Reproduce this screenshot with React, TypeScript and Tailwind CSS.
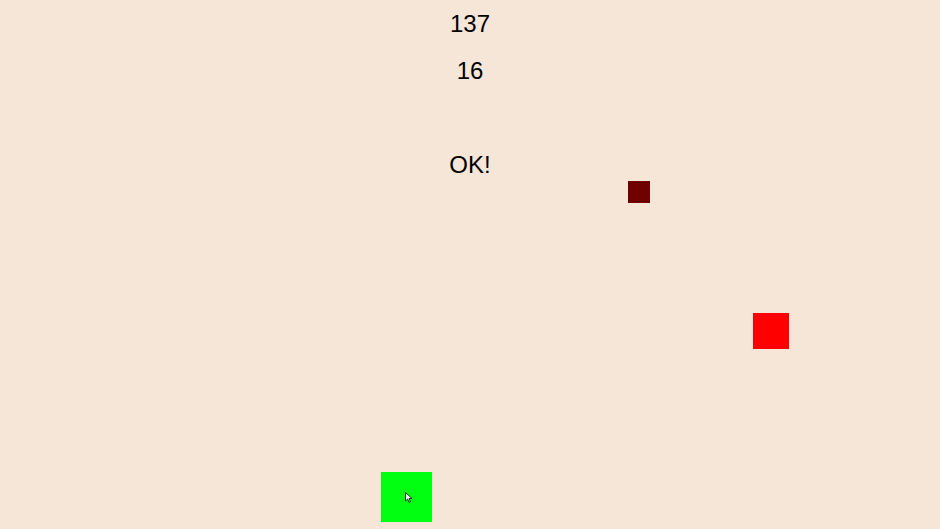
export default function App() {
  return (
    <div className="relative w-[940px] h-[529px] overflow-hidden bg-[#f5e6d8] text-black font-['Liberation_Sans',Arial,sans-serif]">
      <div className="flex flex-col items-center text-[24px] leading-[47px]">
        <div>137</div>
        <div>16</div>
        <div>&nbsp;</div>
        <div>OK!</div>
      </div>

      {/* squares on the canvas */}
      <div className="absolute left-[628px] top-[181px] w-[22px] h-[22px] bg-[#700000]" />
      <div className="absolute left-[753px] top-[313px] w-[36px] h-[36px] bg-[#ff0000]" />
      <div className="absolute left-[381px] top-[472px] w-[51px] h-[50px] bg-[#00ff11]">
        <svg className="absolute left-[24px] top-[20px]" width="8" height="11" viewBox="0 0 8 11">
          <path d="M0.5 0.5 L0.5 9 L2.6 7 L4 10.3 L5.4 9.7 L4 6.5 L7 6.5 Z" fill="#fff" stroke="#000" strokeWidth="0.8" strokeLinejoin="round" />
        </svg>
      </div>
    </div>
  );
}
